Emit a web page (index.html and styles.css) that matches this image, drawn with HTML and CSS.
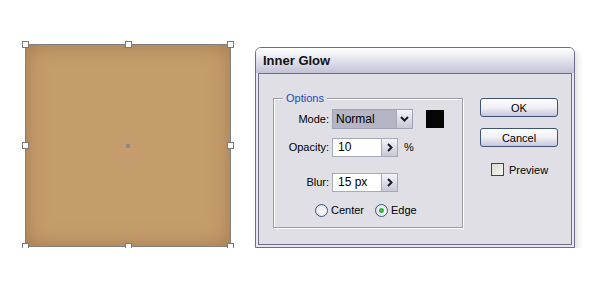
FILE: index.html
```html
<!DOCTYPE html>
<html lang="en">
<head>
  <meta charset="UTF-8" />
  <title>Inner Glow</title>
  <link rel="stylesheet" href="styles.css">
</head>
<body>

  <div class="page">
    <div class="artboard">
      <div class="shape">
        <span class="handle h-tl"></span>
        <span class="handle h-tc"></span>
        <span class="handle h-tr"></span>
        <span class="handle h-ml"></span>
        <span class="handle h-mr"></span>
        <span class="handle h-bl"></span>
        <span class="handle h-bc"></span>
        <span class="handle h-br"></span>
        <span class="center-dot"></span>
      </div>
    </div>

    <div class="dialog">
      <div class="title">Inner Glow</div>
      <div class="dialog-body">
        <fieldset class="options">
          <legend>Options</legend>

          <div class="row row-mode">
            <label class="label">Mode:</label>
            <div class="select">
              <span class="select-value">Normal</span>
              <span class="arrow-btn">
                <svg width="9" height="6" viewBox="0 0 9 6"><polyline points="1,1 4.5,4.5 8,1" fill="none" stroke="#1a1a2a" stroke-width="2"/></svg>
              </span>
            </div>
            <span class="swatch"></span>
          </div>

          <div class="row row-opacity">
            <label class="label">Opacity:</label>
            <div class="field">
              <span class="field-value">10</span>
              <span class="arrow-btn">
                <svg width="6" height="9" viewBox="0 0 6 9"><polyline points="1,1 4.5,4.5 1,8" fill="none" stroke="#1a1a2a" stroke-width="2"/></svg>
              </span>
            </div>
            <span class="unit">%</span>
          </div>

          <div class="row row-blur">
            <label class="label">Blur:</label>
            <div class="field">
              <span class="field-value">15 px</span>
              <span class="arrow-btn">
                <svg width="6" height="9" viewBox="0 0 6 9"><polyline points="1,1 4.5,4.5 1,8" fill="none" stroke="#1a1a2a" stroke-width="2"/></svg>
              </span>
            </div>
          </div>

          <div class="row row-radios">
            <span class="radio"></span><span class="radio-label">Center</span>
            <span class="radio checked"></span><span class="radio-label">Edge</span>
          </div>
        </fieldset>

        <div class="actions">
          <button class="btn">OK</button>
          <button class="btn">Cancel</button>
          <div class="preview">
            <span class="checkbox"></span>
            <span>Preview</span>
          </div>
        </div>
      </div>
    </div>
  </div>

</body>
</html>
```

FILE: styles.css
```css
body {
  margin: 0;
  background: #fff;
  font-family: 'Liberation Sans', Arial, sans-serif;
  font-size: 11px;
  color: #000;
}

.page {
  display: flex;
  align-items: flex-start;
}

/* artboard with selected shape */
.artboard {
  padding: 44px 0 0 25px;
}

.shape {
  position: relative;
  width: 204px;
  height: 201px;
  border: 1px solid #7f7f7f;
  background: #c59c6c;
  box-shadow: inset 0 0 20px rgba(140, 100, 60, 0.6);
}

.handle {
  position: absolute;
  width: 5px;
  height: 5px;
  background: #fff;
  border: 1px solid #7a7a7a;
}

.h-tl { left: -4px; top: -4px; }
.h-tc { left: 99px; top: -4px; }
.h-tr { right: -4px; top: -4px; }
.h-ml { left: -4px; top: 97px; }
.h-mr { right: -4px; top: 97px; }
.h-bl { left: -4px; bottom: -4px; }
.h-bc { left: 99px; bottom: -4px; }
.h-br { right: -4px; bottom: -4px; }

.center-dot {
  position: absolute;
  left: 100px;
  top: 99px;
  width: 4px;
  height: 4px;
  background: #8a8a8a;
}

/* dialog */
.dialog {
  margin: 47px 0 0 24px;
  width: 318px;
  height: 199px;
  border: 1px solid #6f6b8d;
  border-radius: 6px 6px 0 0;
  background: #e6e6ec;
  display: flex;
  flex-direction: column;
  box-shadow: 3px 4px 6px rgba(0, 0, 0, 0.13);
}

.title {
  height: 25px;
  padding-left: 7px;
  line-height: 26px;
  font-size: 13px;
  font-weight: bold;
  color: #111;
  border-radius: 5px 5px 0 0;
  background: linear-gradient(#ffffff, #eeeef4 30%, #c2c2d6);
}

.dialog-body {
  flex: 1;
  margin: 0 2px 2px;
  border: 1px solid #6f6b8d;
  background: #dfdfe5;
  display: flex;
  align-items: flex-start;
}

.options {
  margin: 18px 0 0 14px;
  padding: 0 0 10px;
  width: 188px;
  border: 1px solid #9c9ca6;
  box-shadow: 1px 1px 0 #fff, inset 1px 1px 0 #fff;
}

.options legend {
  margin-left: 9px;
  padding: 0 3px;
  line-height: 12px;
  color: #1a4bc0;
  background: #dfdfe5;
}

.row {
  display: flex;
  align-items: center;
}

.label {
  width: 55px;
  text-align: right;
  margin-right: 3px;
}

.row-mode {
  margin-top: 5px;
  height: 20px;
}

.row-opacity {
  margin-top: 9px;
  height: 18px;
}

.row-blur {
  margin-top: 17px;
  height: 18px;
}

.row-radios {
  margin-top: 12px;
  height: 14px;
  padding-left: 41px;
}

.select {
  display: flex;
  width: 79px;
  height: 18px;
  border: 1px solid #9fa3b5;
  background: #fff;
}

.select-value {
  flex: 1;
  padding-left: 3px;
  line-height: 18px;
  font-size: 12px;
  background: #b5b5c6;
}

.arrow-btn {
  width: 15px;
  display: flex;
  align-items: center;
  justify-content: center;
  border-left: 1px solid #a8a8b8;
  background: linear-gradient(#f4f4f8, #c8c8d6);
}

.swatch {
  width: 18px;
  height: 18px;
  margin-left: 13px;
  background: #050505;
}

.field {
  display: flex;
  width: 64px;
  height: 17px;
  border: 1px solid #a6abb8;
  background: #fff;
}

.field-value {
  flex: 1;
  padding-left: 5px;
  line-height: 17px;
  font-size: 12px;
}

.unit {
  margin-left: 6px;
}

.radio {
  width: 11px;
  height: 11px;
  border: 1px solid #34588a;
  border-radius: 50%;
  background: radial-gradient(circle at 60% 60%, #ffffff, #dcdce4);
  display: flex;
  align-items: center;
  justify-content: center;
}

.radio.checked::after {
  content: "";
  width: 5px;
  height: 5px;
  border-radius: 50%;
  background: #3cb43c;
}

.radio-label {
  margin: 0 11px 0 3px;
}

/* right column */
.actions {
  margin: 24px 0 0 17px;
  display: flex;
  flex-direction: column;
  align-items: flex-start;
}

.btn {
  width: 78px;
  height: 19px;
  margin-bottom: 11px;
  padding: 0;
  font-family: inherit;
  font-size: 11px;
  color: #000;
  border: 1px solid #3d5478;
  border-radius: 3px;
  background: linear-gradient(#ffffff, #f0f0f6 50%, #c6c6da);
}

.preview {
  display: flex;
  align-items: center;
  margin: 5px 0 0 11px;
  gap: 5px;
}

.checkbox {
  width: 11px;
  height: 11px;
  border: 1px solid #2c4a70;
  background: linear-gradient(135deg, #d6d6cc, #fbfbf8);
}
```
